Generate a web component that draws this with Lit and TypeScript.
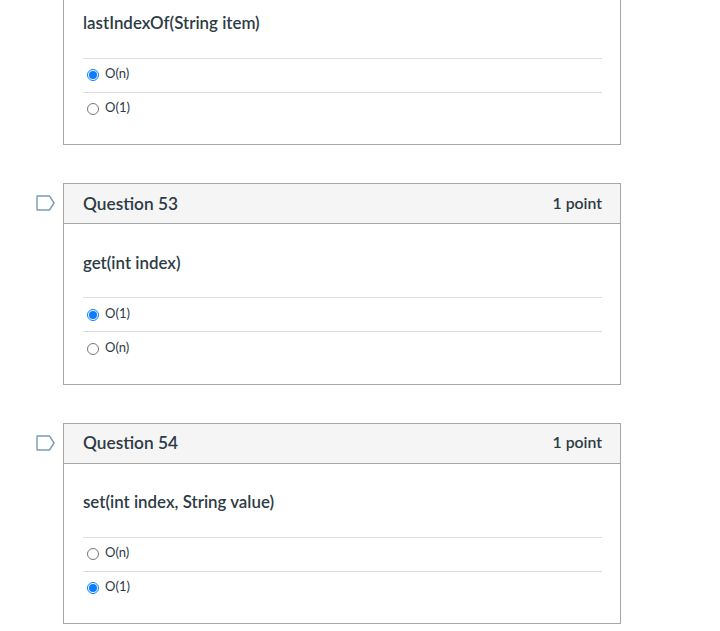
import { LitElement, html, css } from 'lit';
import { customElement, property } from 'lit/decorators.js';

interface Answer {
  label: string;
  checked?: boolean;
}

@customElement('quiz-question')
class QuizQuestion extends LitElement {
  static styles = css`
    :host {
      display: block;
      position: relative;
      margin: 0 0 38px 63px;
      width: 558px;
    }

    .flag {
      position: absolute;
      left: -27px;
      top: 12px;
      width: 19px;
      height: 16px;
    }

    .card {
      border: 1px solid #a6a6a6;
      box-sizing: border-box;
      background: #fff;
    }

    .header {
      display: flex;
      justify-content: space-between;
      align-items: center;
      height: 39px;
      padding: 0 18px 0 19px;
      background: #f5f5f5;
      border-bottom: 1px solid #a6a6a6;
      color: #2d3b45;
    }

    .title {
      font-size: 17.3px;
      font-weight: 600;
      margin-bottom: 1px;
    }

    .points {
      font-size: 15.8px;
      font-weight: 600;
      margin-bottom: 3px;
    }

    .body {
      padding: 28.5px 18px 18.5px 19px;
    }

    .text {
      font-size: 16.9px;
      font-weight: 600;
      line-height: 20px;
      color: #2d3b45;
      margin-bottom: 24.5px;
    }

    .answer {
      display: flex;
      align-items: center;
      gap: 6px;
      height: 33px;
      padding-left: 4px;
      border-top: 1px solid #ddd;
      font-size: 13px;
      color: #2d3b45;
    }

    .label {
      margin-bottom: 4px;
    }

    .radio {
      width: 12px;
      height: 12px;
      box-sizing: border-box;
      border: 1px solid #767676;
      border-radius: 50%;
      display: flex;
      align-items: center;
      justify-content: center;
    }

    .radio.checked {
      border-color: #0a7cff;
    }

    .radio.checked::after {
      content: '';
      width: 8px;
      height: 8px;
      border-radius: 50%;
      background: #0a7cff;
    }
  `;

  @property() title = '';
  @property() text = '';
  @property({ type: Array }) answers: Answer[] = [];
  @property({ type: Boolean }) partial = false;

  render() {
    return html`
      ${this.partial
        ? ''
        : html`<svg class="flag" viewBox="0 0 19 16">
            <path d="M1 1h12.5l4.5 7-4.5 7H1z" fill="#fff" stroke="#7d9cb5" stroke-width="1.4" stroke-linejoin="round"></path>
          </svg>`}
      <div class="card">
        ${this.partial
          ? ''
          : html`<div class="header">
              <span class="title">${this.title}</span>
              <span class="points">1 point</span>
            </div>`}
        <div class="body">
          <div class="text">${this.text}</div>
          ${this.answers.map(
            (a) => html`<div class="answer">
              <span class="radio ${a.checked ? 'checked' : ''}"></span>
              <span class="label">${a.label}</span>
            </div>`
          )}
        </div>
      </div>
    `;
  }
}

@customElement('app-root')
export class AppRoot extends LitElement {
  static styles = css`
    :host {
      display: block;
      height: 631px;
      overflow: hidden;
      background: #fff;
      font-family: 'Lato', 'Liberation Sans', sans-serif;
    }

    .page {
      margin-top: -16.5px;
    }
  `;

  render() {
    return html`
      <div class="page">
        <quiz-question
          partial
          text="lastIndexOf(String item)"
          .answers=${[{ label: 'O(n)', checked: true }, { label: 'O(1)' }]}
        ></quiz-question>
        <quiz-question
          title="Question 53"
          text="get(int index)"
          .answers=${[{ label: 'O(1)', checked: true }, { label: 'O(n)' }]}
        ></quiz-question>
        <quiz-question
          title="Question 54"
          text="set(int index, String value)"
          .answers=${[{ label: 'O(n)' }, { label: 'O(1)', checked: true }]}
        ></quiz-question>
      </div>
    `;
  }
}
